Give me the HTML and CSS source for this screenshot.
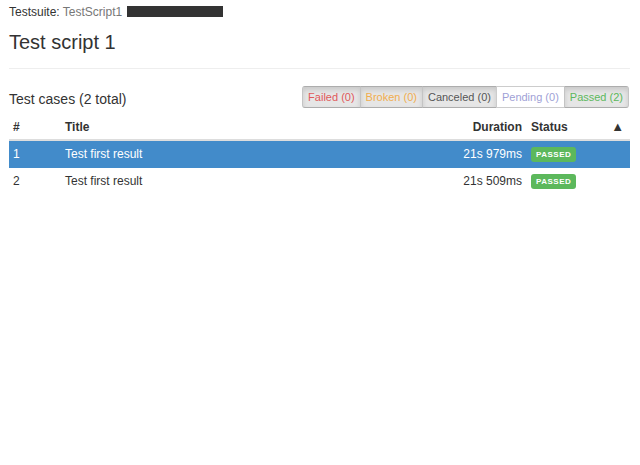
FILE: index.html
```html
<!DOCTYPE html>
<html lang="en">
<head>
<meta charset="utf-8">
<title>Test script 1</title>
<link rel="stylesheet" href="styles.css">
</head>
<body>
<div class="page">
  <div class="suite">Testsuite: <span class="suite-name">TestScript1</span> <span class="redacted"></span></div>
  <h1 class="title">Test script 1</h1>
  <hr class="rule">
  <div class="cases-head">
    <h2 class="cases-title">Test cases (2 total)</h2>
    <div class="filters">
      <button class="filter pressed failed">Failed (0)</button>
      <button class="filter pressed broken">Broken (0)</button>
      <button class="filter pressed canceled">Canceled (0)</button>
      <button class="filter pending">Pending (0)</button>
      <button class="filter pressed passed">Passed (2)</button>
    </div>
  </div>
  <table class="cases">
    <colgroup>
      <col class="c-num">
      <col class="c-title">
      <col class="c-dur">
      <col class="c-status">
    </colgroup>
    <thead>
      <tr>
        <th>#</th>
        <th>Title</th>
        <th class="right">Duration</th>
        <th><span class="sort">&#9650;</span>Status</th>
      </tr>
    </thead>
    <tbody>
      <tr class="selected">
        <td>1</td>
        <td>Test first result</td>
        <td class="right">21s 979ms</td>
        <td><span class="badge">Passed</span></td>
      </tr>
      <tr>
        <td>2</td>
        <td>Test first result</td>
        <td class="right">21s 509ms</td>
        <td><span class="badge">Passed</span></td>
      </tr>
    </tbody>
  </table>
</div>
</body>
</html>
```
FILE: styles.css
```css
* { box-sizing: border-box; }
html, body { margin: 0; padding: 0; background: #fff; }
body {
  font-family: "Liberation Sans", Arial, sans-serif;
  font-size: 12px;
  line-height: 17px;
  color: #333;
}
.page { padding: 4px 10px 0 9px; }
.suite { font-size: 12px; line-height: 17px; }
.suite-name { color: #777; }
.redacted {
  display: inline-block;
  width: 96px;
  height: 11px;
  background: #333;
  vertical-align: -1px;
  margin-left: 1px;
}
.title {
  margin: 9px 0 0;
  font-size: 20px;
  font-weight: normal;
  line-height: 24px;
  color: #333;
}
.rule {
  margin: 14px 0 0;
  border: 0;
  border-top: 1px solid #eee;
  height: 0;
}
.cases-head {
  display: flex;
  justify-content: space-between;
  align-items: center;
  margin-top: 16px;
}
.cases-title {
  margin: 4px 0 0;
  font-size: 14px;
  font-weight: normal;
  line-height: 20px;
}
.filters { display: flex; margin-right: 1px; }
.filter {
  font-family: "Liberation Sans", Arial, sans-serif;
  font-size: 11px;
  line-height: 16px;
  padding: 2px 5px;
  margin: 0 0 0 -1px;
  border: 1px solid #ccc;
  background: #fff;
  border-radius: 0;
  cursor: pointer;
}
.filter:first-child { margin-left: 0; border-radius: 3px 0 0 3px; }
.filter:last-child { border-radius: 0 3px 3px 0; }
.filter.pressed {
  background: #e6e6e6;
  border-color: #adadad #c4c4c4;
  box-shadow: inset 0 3px 5px rgba(0, 0, 0, 0.125);
}
.failed { color: #e0595a; }
.broken { color: #f0ad4e; }
.canceled { color: #555; }
.pending { color: #a09fd6; }
.passed { color: #5cb85c; }

.cases {
  width: 100%;
  border-collapse: collapse;
  margin-top: 6px;
  table-layout: fixed;
}
.c-num { width: 52px; }
.c-dur { width: 90px; }
.c-status { width: 103px; }
.cases th, .cases td {
  line-height: 16px;
  text-align: left;
  white-space: nowrap;
}
.cases th { font-weight: bold; border-bottom: 2px solid #ddd; padding: 4px 5px 4px 4px; }
.cases td { padding: 5px 5px 5px 4px; }
.cases tr + tr td { border-top: 1px solid transparent; }
.cases .right { text-align: right; }
.sort { float: right; font-size: 13px; margin-right: 1px; }
.selected td { background: #428bca; color: #fff; }
.badge {
  display: inline-block;
  background: #5cb85c;
  color: #fff;
  font-size: 8px;
  font-weight: bold;
  letter-spacing: 0.5px;
  text-transform: uppercase;
  line-height: 13px;
  padding: 1px 5px 1px 5px;
  border-radius: 3px;
  vertical-align: 1px;
}
```
